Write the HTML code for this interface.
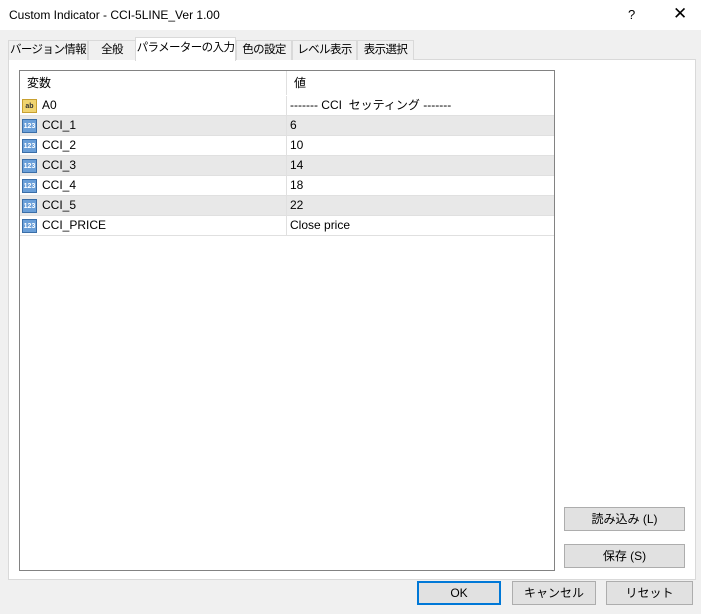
<!DOCTYPE html><html><head><meta charset="utf-8"><style>
*{box-sizing:border-box;margin:0;padding:0}
body{width:701px;height:614px;background:#f0f0f0;font-family:"Liberation Sans","Noto Sans CJK JP",sans-serif;font-size:12px;color:#000;position:relative;overflow:hidden}
.a{position:absolute;white-space:nowrap}
.title{left:0;top:0;width:701px;height:30px;background:#fff}
.tab{top:40px;height:20px;border:1px solid #d9d9d9;border-bottom:none;background:#f0f0f0;text-align:center;line-height:18px;font-size:11.5px;letter-spacing:-0.6px;overflow:hidden}
.panel{left:8px;top:59px;width:688px;height:521px;background:#fff;border:1px solid #d9d9d9}
.list{left:19px;top:70px;width:536px;height:501px;border:1px solid #828282;background:#fff}
.row{position:absolute;left:0;width:534px;height:20px;border-bottom:1px solid #e0e0e0;line-height:19px}
.row.g{background:#e8e8e8}
.row .n{position:absolute;left:22px}
.row .v{position:absolute;border-left:1px solid #e0e0e0;height:20px}
.ic{position:absolute;left:2px;top:3px;width:15px;height:14px;font-size:7px;line-height:13px;text-align:center;font-weight:bold}
.btn{height:24px;border:1px solid #adadad;background:#e1e1e1;text-align:center;line-height:22px}
</style></head><body>
<div class="a title"><span class="a" style="left:9px;top:8px">Custom Indicator - CCI-5LINE_Ver 1.00</span><span class="a" style="left:628px;top:7px;font-size:13px">?</span><span class="a" style="left:673px;top:4px;font-size:17px">✕</span></div>
<div class="a panel"></div>
<div class="a tab" style="left:8px;width:80px">バージョン情報</div>
<div class="a tab" style="left:88px;width:48px">全般</div>
<div class="a tab" style="left:236px;width:56px">色の設定</div>
<div class="a tab" style="left:292px;width:65px">レベル表示</div>
<div class="a tab" style="left:357px;width:57px">表示選択</div>
<div class="a tab" style="left:135px;top:37px;width:101px;height:24px;background:#fff;line-height:20px">パラメーターの入力</div>
<div class="a list">
<div class="row" style="top:0;height:25px;border-bottom:none;line-height:25px"><span class="a" style="left:7px">変数</span><span class="a" style="left:266px;top:0;height:24px;border-left:1px solid #e0e0e0;padding-left:7px">値</span></div>
<div class="row" style="top:25px"><span class="ic" style="background:#f0d470;border:1px solid #c8a030;color:#333">ab</span><span class="n">A0</span><span class="v" style="left:266px;padding-left:3px">------- CCI&nbsp; セッティング -------</span></div>
<div class="row g" style="top:45px"><span class="ic" style="background:#6a9fd8;border:1px solid #3a6ea8;color:#fff">123</span><span class="n">CCI_1</span><span class="v" style="left:266px;padding-left:3px">6</span></div>
<div class="row" style="top:65px"><span class="ic" style="background:#6a9fd8;border:1px solid #3a6ea8;color:#fff">123</span><span class="n">CCI_2</span><span class="v" style="left:266px;padding-left:3px">10</span></div>
<div class="row g" style="top:85px"><span class="ic" style="background:#6a9fd8;border:1px solid #3a6ea8;color:#fff">123</span><span class="n">CCI_3</span><span class="v" style="left:266px;padding-left:3px">14</span></div>
<div class="row" style="top:105px"><span class="ic" style="background:#6a9fd8;border:1px solid #3a6ea8;color:#fff">123</span><span class="n">CCI_4</span><span class="v" style="left:266px;padding-left:3px">18</span></div>
<div class="row g" style="top:125px"><span class="ic" style="background:#6a9fd8;border:1px solid #3a6ea8;color:#fff">123</span><span class="n">CCI_5</span><span class="v" style="left:266px;padding-left:3px">22</span></div>
<div class="row" style="top:145px"><span class="ic" style="background:#6a9fd8;border:1px solid #3a6ea8;color:#fff">123</span><span class="n">CCI_PRICE</span><span class="v" style="left:266px;padding-left:3px">Close price</span></div>
</div>
<div class="a btn" style="left:564px;top:507px;width:121px">読み込み (L)</div>
<div class="a btn" style="left:564px;top:544px;width:121px">保存 (S)</div>
<div class="a btn" style="left:417px;top:581px;width:84px;border:2px solid #0078d7;line-height:20px">OK</div>
<div class="a btn" style="left:512px;top:581px;width:84px">キャンセル</div>
<div class="a btn" style="left:606px;top:581px;width:87px">リセット</div>
</body></html>
